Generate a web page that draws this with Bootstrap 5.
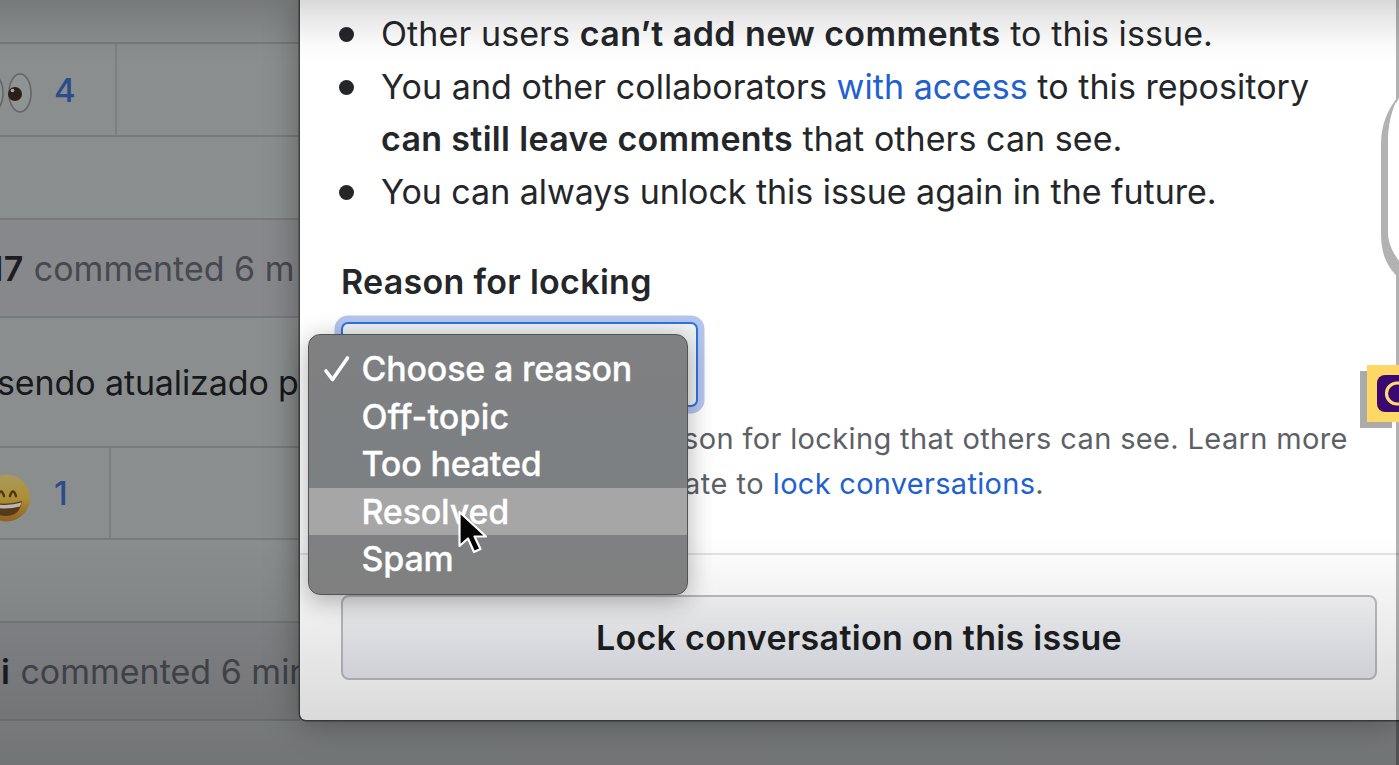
<!DOCTYPE html>
<html lang="en">
<head>
<meta charset="utf-8">
<meta name="viewport" content="width=device-width, initial-scale=1">
<title>Lock conversation on this issue</title>
<link rel="stylesheet" href="https://cdn.jsdelivr.net/npm/bootstrap@5.3.0/dist/css/bootstrap.min.css">
<style>
  body{font-family:Inter,"Liberation Sans",sans-serif;font-size:34px;color:#24262a;background:#8b8e8f}
  .stage{width:1399px;height:765px}
  strong{font-weight:600;letter-spacing:.42px}

  /* dimmed issue thread */
  .thread{width:300px;background:#8b8e8f;color:#17191d}
  .thread>.ruled{border-bottom:2px solid #787b7e}
  .head-row{height:98px;background:#87888b;color:#46494f}
  .head-row strong{color:#1b1d21;margin-right:10px}
  .r17{margin-left:-11px}
  .rsi{margin-left:-18px}
  .gap-top{height:44px}
  .reactions{height:93px}
  .gap-mid{height:83px}
  .comment-row{height:130px;letter-spacing:-.12px}
  .comment-row span{margin-left:-3px}
  .second{height:92px}
  .last-head{height:98px;padding-top:1px}
  .reaction{width:117px;border-right:2px solid #7d8083;color:#2b4b8b}
  .second .reaction{width:111px}
  .reaction svg{width:46px;height:60px}
  .count{font-size:33px;font-weight:500;line-height:1;padding-top:1px}

  /* dialog */
  .lock-dialog{width:1099px;height:720px;background:#fff;border-radius:0 0 0 6px;box-shadow:0 0 0 1.5px #3f4143,0 2px 34px rgba(0,0,0,.36)}
  .lock-body{height:553px;padding:8px 20px 0 41px}
  .rules{line-height:52.5px}
  .rules li{padding-left:40px;position:relative;letter-spacing:.09px}
  .rules li:last-child{letter-spacing:-.04px}
  .rules li:nth-child(2){letter-spacing:.06px}
  .rules li:nth-child(2) strong{letter-spacing:.32px}
  .rules li::before{content:"";position:absolute;left:-2px;top:19px;width:15px;height:15px;border-radius:50%;background:#24262a}
  .blue{color:#2160cf}
  .reason-label{font-weight:600;line-height:50px;margin-top:39px;letter-spacing:.3px}
  .reason-select{width:357px;height:85px;margin-top:15px;border:2px solid #2f72e2;border-radius:7px;background:#f1f2f2;box-shadow:0 0 0 6.5px #b5c6ee}
  .note{font-size:29px;line-height:45px;color:#5d6066;letter-spacing:.36px;margin:9px 0 0 342px}
  .note .blue{letter-spacing:.29px}
  .note .second-line{letter-spacing:.5px;padding-left:1px}
  .lock-foot{height:167px;border-top:2px solid #e3e4e6;padding:40px 22px 0 41px}
  .lock-btn{height:85px;border:2px solid #bbbdc0;border-radius:8px;background:linear-gradient(#f5f5f7,#e8eaf1);font-size:34px;font-weight:600;letter-spacing:.3px;color:#1c1e22;padding:0}

  /* native option list */
  .options{left:308px;top:334px;width:380px;height:261px;padding:10px 0;border:1.5px solid #515355;border-radius:12px;background:linear-gradient(#7e8082,#7d8082 55%,#808080);box-shadow:0 5px 26px rgba(0,0,0,.32);color:#fff;font-weight:500}
  .options li{height:47.6px;padding-left:52.5px;line-height:47px;position:relative;letter-spacing:-.2px;-webkit-text-stroke:.3px #fff}
  .options li:nth-child(2){letter-spacing:.15px}
  .options li.hovered{background:#a6a6a6}
  .tick{position:absolute;left:14px;top:8px}
  .pointer{left:455px;top:507px}

  /* overlays at the right edge */
  .edge{right:0;top:0;width:3px;height:765px;background:rgba(0,0,0,.3)}
  .pill{left:1381px;top:84px}
  .tag{left:1367px;top:365px;width:32px;height:57px;background:#fed764;box-shadow:-7px 6px 0 #ababab}
  .shade{inset:0;pointer-events:none;background:linear-gradient(rgba(0,0,0,.15),rgba(0,0,0,.09) 18px,rgba(0,0,0,.02) 45px,transparent 65px,transparent 535px,rgba(0,0,0,.13) 700px,rgba(0,0,0,.18) 765px)}
</style>
</head>
<body class="overflow-hidden">
<main class="stage position-relative d-flex overflow-hidden text-nowrap">
  <section class="thread flex-shrink-0">
    <div class="ruled gap-top"></div>
    <div class="ruled reactions d-flex">
      <div class="reaction d-flex align-items-center">
        <svg viewBox="0 0 46 60">
          <g fill="#909393" stroke="#626466" stroke-width="1.5"><ellipse cx="-8" cy="33" rx="11" ry="19"/><ellipse cx="20" cy="33" rx="11" ry="19"/></g>
          <circle cx="15" cy="34" r="7" fill="#2a2019"/><circle cx="12.500" cy="30.500" r="1.800" fill="#aaa"/>
        </svg>
        <span class="count ms-2">4</span>
      </div>
    </div>
    <div class="ruled gap-mid"></div>
    <div class="ruled head-row d-flex align-items-center"><strong class="r17">17</strong><span>commented 6 m</span></div>
    <div class="ruled comment-row d-flex align-items-center"><span>sendo atualizado p</span></div>
    <div class="ruled reactions second d-flex">
      <div class="reaction d-flex align-items-center">
        <svg viewBox="0 0 46 60">
          <defs><linearGradient id="face" x1="0" y1="0" x2="0" y2="1"><stop offset="0" stop-color="#a99a5c"/><stop offset=".5" stop-color="#ad8f35"/><stop offset="1" stop-color="#8f601f"/></linearGradient></defs>
          <circle cx="6.500" cy="35" r="23.500" fill="url(#face)"/>
          <path d="M-2 33q3-9 6 0M10 33q3-9 6 0" fill="none" stroke="#4d3516" stroke-width="2.400" stroke-linecap="round"/>
          <path d="M-10 39Q6 43 22 38Q20 53 6 53Q-8 53-10 39Z" fill="#56391d"/>
          <path d="M-9 40Q6 44 21.500 39.500L20 43.500Q6 47-8 44Z" fill="#b9b8b2"/>
        </svg>
        <span class="count ms-2">1</span>
      </div>
    </div>
    <div class="ruled gap-mid"></div>
    <div class="ruled head-row last-head d-flex align-items-center"><strong class="rsi">si</strong><span>commented 6 min</span></div>
  </section>

  <section class="lock-dialog position-relative flex-shrink-0">
    <div class="lock-body">
      <ul class="rules list-unstyled mb-0">
        <li>Other users <strong>can’t add new comments</strong> to this issue.</li>
        <li>You and other collaborators <span class="blue">with access</span> to this repository<br><strong>can still leave comments</strong> that others can see.</li>
        <li>You can always unlock this issue again in the future.</li>
      </ul>
      <div class="reason-label">Reason for locking</div>
      <div class="reason-select"></div>
      <p class="note">son for locking that others can see. Learn more<br><span class="second-line">ate to <span class="blue">lock conversations</span>.</span></p>
    </div>
    <div class="lock-foot">
      <button type="button" class="lock-btn btn w-100">Lock conversation on this issue</button>
    </div>
  </section>

  <div class="shade position-absolute"></div>

  <ul class="options list-unstyled mb-0 position-absolute overflow-hidden">
    <li><svg class="tick" width="30" height="32" viewBox="0 0 30 32"><path d="M3 18l6.500 8.500L24.500 5" fill="none" stroke="#fff" stroke-width="3.600" stroke-linecap="round" stroke-linejoin="round"/></svg>Choose a reason</li>
    <li>Off-topic</li>
    <li>Too heated</li>
    <li class="hovered">Resolved</li>
    <li>Spam</li>
  </ul>
  <svg class="pointer position-absolute" width="34" height="50" viewBox="0 0 34 50"><path d="M4.500 5v34l8.500-7.500 6 13.500 6.500-3-6-12.500h11.500z" fill="#050505" stroke="#fff" stroke-width="2.200" stroke-linejoin="round"/></svg>

  <div class="edge position-absolute"></div>
  <svg class="pill position-absolute" width="18" height="200" viewBox="0 0 18 200"><path d="M18 12C6 25 0 42 0 60V150C0 170 6 183 18 194V177C12 168 7 160 7 146V60C7 40 11 24 18 12Z" fill="#b2b2b2"/><path d="M18 14C11 26 7 40 7 60V146C7 160 12 168 18 177Z" fill="#fff"/></svg>
  <div class="tag position-absolute">
    <svg class="d-block" width="32" height="57" viewBox="0 0 32 57"><rect x="10" y="10" width="40" height="37" rx="8" fill="#3a0870"/><circle cx="30" cy="28.500" r="10.500" fill="none" stroke="#fedb75" stroke-width="3.200"/></svg>
  </div>
</main>
<script src="https://cdn.jsdelivr.net/npm/bootstrap@5.3.0/dist/js/bootstrap.bundle.min.js"></script>
</body>
</html>
